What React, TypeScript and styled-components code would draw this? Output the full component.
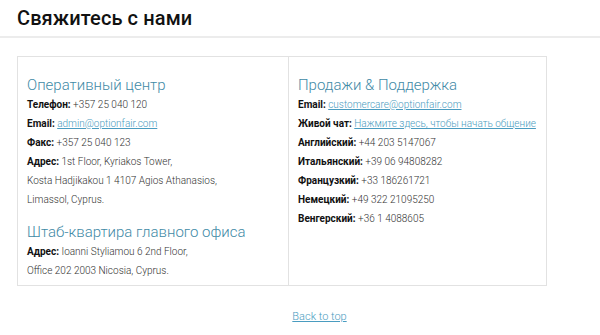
import * as React from 'react';
import styled, { createGlobalStyle } from 'styled-components';

const GlobalStyle = createGlobalStyle`
  html, body {
    margin: 0;
    padding: 0;
    background: #ffffff;
    font-family: Roboto, 'Liberation Sans', sans-serif;
    color: #222;
  }
`;

const Page = styled.div`
  width: 600px;
  height: 335px;
  overflow: hidden;
`;

const Header = styled.div`
  height: 36px;
  border-bottom: 2px solid #ececec;
  padding-left: 17px;
  display: flex;
  align-items: center;
`;

const PageTitle = styled.h1`
  margin: 0;
  font-size: 20px;
  font-weight: 500;
  color: #111;
  letter-spacing: 0.1px;
`;

const Table = styled.div`
  margin: 18px 0 0 17px;
  width: 530px;
  height: 230px;
  display: grid;
  grid-template-columns: 271px 1fr;
  border: 1px solid #e2e2e2;
  box-sizing: border-box;
`;

const Column = styled.div<{ $first?: boolean }>`
  padding: 19px 0 0 9px;
  border-right: ${(p) => (p.$first ? '1px solid #e2e2e2' : 'none')};
`;

const Heading = styled.h2<{ $spaced?: boolean }>`
  margin: ${(p) => (p.$spaced ? '14px' : '0')} 0 0 0;
  font-size: 15px;
  font-weight: 300;
  line-height: 19px;
  color: #3f8aa6;
`;

const Line = styled.div`
  font-size: 10px;
  line-height: 19px;
  font-weight: 300;
  color: #333;
  white-space: nowrap;
`;

const Label = styled.b`
  font-weight: 700;
  color: #111;
`;

const Link = styled.a`
  color: #4a9cc0;
  text-decoration: underline;
`;

const Footer = styled.div`
  display: flex;
  justify-content: center;
  padding-top: 24px;
  padding-left: 39px;
`;

const TopLink = styled.a`
  font-size: 11px;
  font-weight: 300;
  color: #4a9cc0;
  text-decoration: underline;
`;

const Row = ({ label, children }: { label?: string; children: React.ReactNode }) => (
  <Line>
    {label && <Label>{label}:</Label>} {children}
  </Line>
);

export default function App() {
  return (
    <Page>
      <GlobalStyle />
      <Header>
        <PageTitle>Свяжитесь с нами</PageTitle>
      </Header>
      <Table>
        <Column $first>
          <Heading>Оперативный центр</Heading>
          <Row label="Телефон">+357 25 040 120</Row>
          <Row label="Email">
            <Link href="#">admin@optionfair.com</Link>
          </Row>
          <Row label="Факс">+357 25 040 123</Row>
          <Row label="Адрес">1st Floor, Kyriakos Tower,</Row>
          <Line>Kosta Hadjikakou 1 4107 Agios Athanasios,</Line>
          <Line>Limassol, Cyprus.</Line>
          <Heading $spaced>Штаб-квартира главного офиса</Heading>
          <Row label="Адрес">Ioanni Styliamou 6 2nd Floor,</Row>
          <Line>Office 202 2003 Nicosia, Cyprus.</Line>
        </Column>
        <Column>
          <Heading>Продажи &amp; Поддержка</Heading>
          <Row label="Email">
            <Link href="#">customercare@optionfair.com</Link>
          </Row>
          <Row label="Живой чат">
            <Link href="#">Нажмите здесь, чтобы начать общение</Link>
          </Row>
          <Row label="Английский">+44 203 5147067</Row>
          <Row label="Итальянский">+39 06 94808282</Row>
          <Row label="Французкий">+33 186261721</Row>
          <Row label="Немецкий">+49 322 21095250</Row>
          <Row label="Венгерский">+36 1 4088605</Row>
        </Column>
      </Table>
      <Footer>
        <TopLink href="#">Back to top</TopLink>
      </Footer>
    </Page>
  );
}
